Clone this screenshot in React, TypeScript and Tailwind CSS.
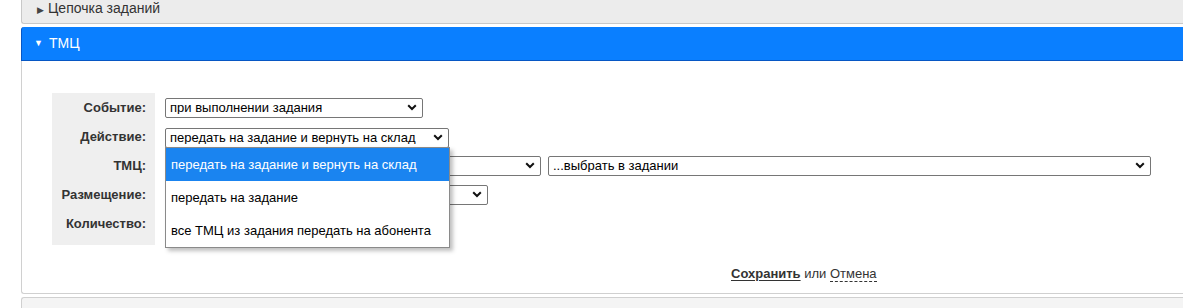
const Chevron = () => (
  <svg width="10" height="7" viewBox="0 0 10 7" className="shrink-0">
    <path d="M1.2 1.2 L5 5 L8.8 1.2" fill="none" stroke="#111" strokeWidth="2" />
  </svg>
);

const Select = ({ text, width }: { text: string; width: string }) => (
  <div
    className={`${width} h-[20px] flex items-center justify-between border border-[#767676] rounded-[2px] bg-white pl-[4px] pr-[5px] text-[13px] text-black leading-none`}
  >
    <span className="truncate">{text}</span>
    <Chevron />
  </div>
);

const Label = ({ children }: { children: string }) => (
  <div className="h-[29px] flex items-center justify-end pr-[9px] font-bold text-[13px] text-[#333]">
    {children}
  </div>
);

const options = [
  "передать на задание и вернуть на склад",
  "передать на задание",
  "все ТМЦ из задания передать на абонента",
];

export default function App() {
  return (
    <div
      className="w-[1183px] h-[308px] overflow-hidden bg-white"
      style={{ fontFamily: '"Liberation Sans", Arial, sans-serif' }}
    >
      <div className="ml-[21px] -mt-[6px] h-[30px] flex items-end pb-[4px] pl-[15px] bg-[#ececec] border-l border-b border-[#c8c8c8] rounded-bl-[3px] text-[14px] text-[#333]">
        <span className="text-[9px] mr-[4px] mb-[2px] text-[#444]">▶</span>
        Цепочка заданий
      </div>

      <div className="ml-[21px] mt-[3px] h-[34px] flex items-center pl-[12px] bg-[#0a7fff] border-l border-b border-[#0757c4] rounded-tl-[3px] text-[14px] text-white">
        <span className="text-[9px] mr-[6px]">▼</span>
        ТМЦ
      </div>

      <div className="ml-[21px] h-[233px] border-l border-b border-[#d0d0d0] rounded-bl-[3px] pt-[32px] pl-[30px]">
        <div className="relative flex">
          <div className="w-[103px] bg-[#efefef] pb-[7px]">
            <Label>Событие:</Label>
            <Label>Действие:</Label>
            <Label>ТМЦ:</Label>
            <Label>Размещение:</Label>
            <Label>Количество:</Label>
          </div>
          <div className="pl-[10px] flex flex-col">
            <div className="h-[29px] flex items-center">
              <Select text="при выполнении задания" width="w-[258px]" />
            </div>
            <div className="h-[29px] flex items-center pt-[2px]">
              <Select text="передать на задание и вернуть на склад" width="w-[284px]" />
            </div>
            <div className="h-[29px] flex items-center gap-[7px]">
              <Select text="" width="w-[376px]" />
              <Select text="...выбрать в задании" width="w-[603px]" />
            </div>
            <div className="h-[29px] flex items-center">
              <Select text="" width="w-[323px]" />
            </div>
            <div className="h-[29px]" />
          </div>

          <div className="absolute left-[113px] top-[54px] w-[285px] bg-white border border-[#8a8a8a] shadow-[3px_3px_4px_rgba(0,0,0,0.25)] text-[13px] text-black">
            {options.map((o, i) => (
              <div
                key={o}
                className={`h-[33px] flex items-center pl-[5px] ${i === 0 ? "bg-[#1a84f0] text-white" : ""}`}
              >
                {o}
              </div>
            ))}
          </div>
        </div>

        <div className="mt-[19px] pl-[679px] text-[13px] text-[#333]">
          <span className="font-bold underline underline-offset-2">Сохранить</span>
          <span> или </span>
          <span className="border-b border-dashed border-[#333]">Отмена</span>
        </div>
      </div>

      <div className="ml-[21px] mt-[3px] h-[20px] bg-[#f4f4f4] border-l border-t border-[#d0d0d0] rounded-tl-[3px]" />
    </div>
  );
}
